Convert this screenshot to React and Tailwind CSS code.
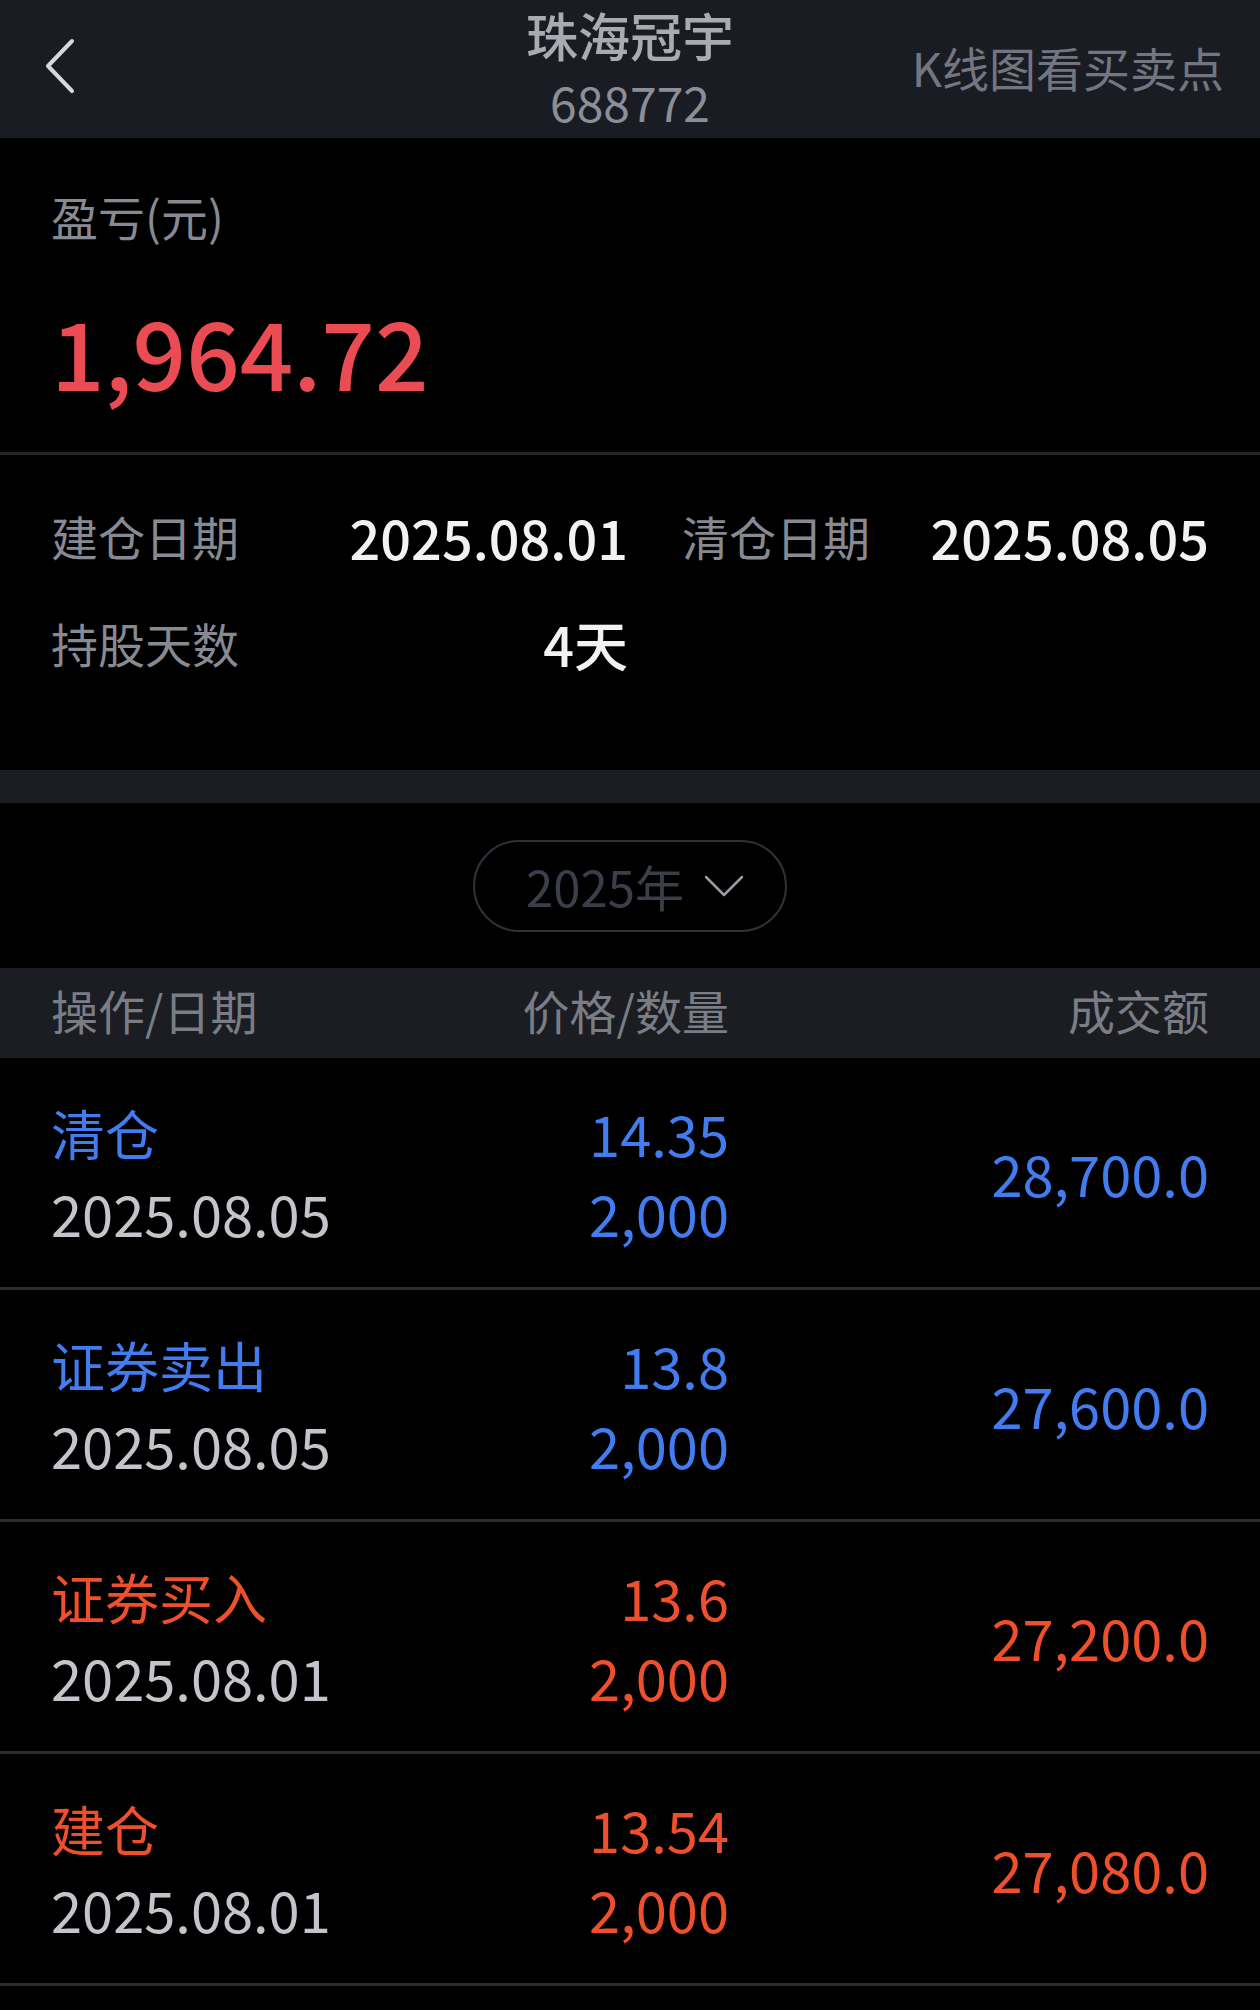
const font = { fontFamily: '"Noto Sans CJK SC", "Noto Sans", sans-serif' };

const trades = [
  { op: "清仓", date: "2025.08.05", price: "14.35", qty: "2,000", amount: "28,700.0", side: "sell" },
  { op: "证券卖出", date: "2025.08.05", price: "13.8", qty: "2,000", amount: "27,600.0", side: "sell" },
  { op: "证券买入", date: "2025.08.01", price: "13.6", qty: "2,000", amount: "27,200.0", side: "buy" },
  { op: "建仓", date: "2025.08.01", price: "13.54", qty: "2,000", amount: "27,080.0", side: "buy" },
];

const BackIcon = () => (
  <svg width="40" height="60" viewBox="0 0 40 60" fill="none">
    <path
      d="M27 6 L3 31 L27 56"
      stroke="#d6d8de"
      strokeWidth="4"
      strokeLinecap="round"
      strokeLinejoin="round"
    />
  </svg>
);

export default function App() {
  return (
    <div className="min-h-screen w-[1260px] bg-black" style={font}>
      {/* Header */}
      <div className="relative h-[138px] bg-[#1a1c23]">
        <div className="absolute left-[45px] top-[35px]">
          <BackIcon />
        </div>
        <div className="flex flex-col items-center pt-[5px]">
          <div className="text-[52px] font-medium leading-[60px] text-[#a8abb2]">
            珠海冠宇
          </div>
          <div className="mt-[10px] text-[48px] leading-[52px] text-[#8c8f97]">688772</div>
        </div>
        <div className="absolute right-[36px] top-[40px] text-[47px] leading-[54px] text-[#737680]">
          K线图看买卖点
        </div>
      </div>

      {/* P&L */}
      <div className="border-b-[3px] border-[#24262b] px-[51px] pt-[50px] pb-[52px]">
        <div className="text-[47px] leading-[56px] text-[#878a92]">盈亏(元)</div>
        <div className="mt-[56px] text-[94px] font-medium leading-[100px] text-[#eb4b53]">
          1,964.72
        </div>
      </div>

      {/* Holding info */}
      <div className="px-[51px] pt-[41px] pb-[87px]">
        <div className="flex h-[80px] items-center">
          <span className="w-[280px] text-[47px] text-[#878a92]">建仓日期</span>
          <span className="w-[297px] text-right text-[54px] font-medium text-[#f2f2f4]">
            2025.08.01
          </span>
          <span className="ml-[54px] w-[220px] text-[47px] text-[#878a92]">清仓日期</span>
          <span className="flex-1 text-right text-[54px] font-medium text-[#f2f2f4]">
            2025.08.05
          </span>
        </div>
        <div className="mt-[27px] flex h-[80px] items-center">
          <span className="w-[280px] text-[47px] text-[#878a92]">持股天数</span>
          <span className="w-[297px] text-right text-[54px] font-medium text-[#f2f2f4]">
            4天
          </span>
        </div>
      </div>

      <div className="h-[33px] bg-[#1b1d22]" />

      {/* Year picker */}
      <div className="flex h-[165px] items-center justify-center">
        <div className="flex h-[92px] w-[314px] items-center justify-center gap-[20px] rounded-full border-2 border-[#2e3139] pl-[10px]">
          <span className="text-[49px] text-[#3b3f4a]">2025年</span>
          <svg width="40" height="24" viewBox="0 0 40 24" fill="none">
            <path d="M2 3 L20 21 L38 3" stroke="#9a9ca3" strokeWidth="2.5" strokeLinecap="round" strokeLinejoin="round" />
          </svg>
        </div>
      </div>

      {/* Table header */}
      <div className="flex h-[90px] items-center bg-[#1b1d22] px-[51px] pb-[5px] text-[47px] text-[#7a7d86]">
        <span className="w-[400px]">操作/日期</span>
        <span className="w-[278px] text-right">价格/数量</span>
        <span className="flex-1 text-right">成交额</span>
      </div>

      {/* Trades */}
      {trades.map((t) => {
        const color = t.side === "sell" ? "text-[#417cf1]" : "text-[#ef502b]";
        return (
          <div
            key={t.op}
            className="flex h-[232px] items-center border-b-[3px] border-[#2a2c31] px-[51px]"
          >
            <div className="flex w-[400px] flex-col gap-[16px]">
              <span className={`text-[54px] leading-[64px] ${color}`}>{t.op}</span>
              <span className="text-[56px] leading-[64px] text-[#c3c5cb]">{t.date}</span>
            </div>
            <div className={`flex w-[278px] flex-col gap-[16px] text-right ${color}`}>
              <span className="text-[56px] leading-[64px]">{t.price}</span>
              <span className="text-[56px] leading-[64px]">{t.qty}</span>
            </div>
            <div className={`flex-1 text-right text-[56px] ${color}`}>{t.amount}</div>
          </div>
        );
      })}
    </div>
  );
}
